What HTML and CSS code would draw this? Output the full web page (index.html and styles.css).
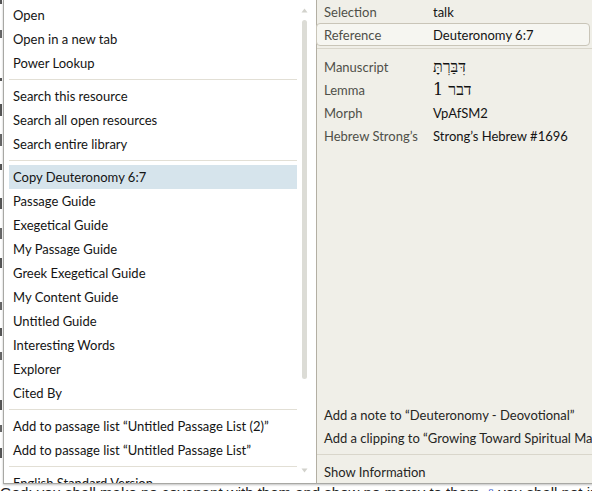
FILE: index.html
```html
<!DOCTYPE html>
<html>
<head>
<meta charset="utf-8">
<link rel="stylesheet" href="styles.css">
</head>
<body>
<div class="doc">
  <div class="strip"></div>
  <p class="last">God: you shall make no covenant with them and show no mercy to them. <span class="fn">⁸</span> you shall not intermarry</p>
</div>

<div class="popup">
  <div class="menu">
    <div class="list">
      <div class="item">Open</div>
      <div class="item">Open in a new tab</div>
      <div class="item">Power Lookup</div>
      <div class="sep"></div>
      <div class="item">Search this resource</div>
      <div class="item">Search all open resources</div>
      <div class="item">Search entire library</div>
      <div class="sep"></div>
      <div class="item active">Copy Deuteronomy 6:7</div>
      <div class="item">Passage Guide</div>
      <div class="item">Exegetical Guide</div>
      <div class="item">My Passage Guide</div>
      <div class="item">Greek Exegetical Guide</div>
      <div class="item">My Content Guide</div>
      <div class="item">Untitled Guide</div>
      <div class="item">Interesting Words</div>
      <div class="item">Explorer</div>
      <div class="item">Cited By</div>
      <div class="sep"></div>
      <div class="item">Add to passage list “Untitled Passage List (2)”</div>
      <div class="item">Add to passage list “Untitled Passage List”</div>
      <div class="sep"></div>
      <div class="item cut">English Standard Version</div>
    </div>
    <div class="scroll">
      <svg class="arrow" width="7" height="5" viewBox="0 0 7 5"><path d="M3.5 0.5 L6.5 4.5 L0.5 4.5 Z" fill="#d2d2cc"/></svg>
      <div class="thumb"></div>
      <div class="track-rest"></div>
      <svg class="arrow" width="7" height="5" viewBox="0 0 7 5"><path d="M0.5 0.5 L6.5 0.5 L3.5 4.5 Z" fill="#d2d2cc"/></svg>
    </div>
  </div>

  <div class="info">
    <div class="top">
      <div class="prow"><span class="lbl">Selection</span><span class="val">talk</span></div>
      <div class="prow ref"><span class="lbl">Reference</span><span class="val">Deuteronomy 6:7</span></div>
      <div class="psep"></div>
      <div class="prow"><span class="lbl">Manuscript</span><span class="val heb" dir="rtl">דִּבַּרְתָּ</span></div>
      <div class="prow"><span class="lbl">Lemma</span><span class="val heb" dir="rtl">דבר 1</span></div>
      <div class="prow"><span class="lbl">Morph</span><span class="val">VpAfSM2</span></div>
      <div class="prow"><span class="lbl">Hebrew Strong’s</span><span class="val">Strong’s Hebrew #1696</span></div>
    </div>
    <div class="bottom">
      <div class="prow act">Add a note to “Deuteronomy - Deovotional”</div>
      <div class="prow act">Add a clipping to “Growing Toward Spiritual Maturity”</div>
      <div class="psep wide"></div>
      <div class="prow act">Show Information</div>
    </div>
  </div>
</div>
</body>
</html>
```
FILE: styles.css
```css
html, body {
  margin: 0;
  padding: 0;
}
body {
  width: 592px;
  height: 491px;
  overflow: hidden;
  position: relative;
  background: #ffffff;
  font-family: "Lato", "Liberation Sans", sans-serif;
}
.doc {
  font-family: "Liberation Sans", sans-serif;
  font-size: 15px;
  color: #222;
}
.strip {
  width: 2px;
  height: 482px;
  background: linear-gradient(to bottom,
    #555 0px, #555 4px, transparent 4px, transparent 30px,
    #666 30px, #666 38px, transparent 38px, transparent 78px,
    #555 78px, #555 81px, transparent 81px, transparent 104px,
    #555 104px, #555 116px, transparent 116px, transparent 134px,
    #666 134px, #666 146px, transparent 146px, transparent 164px,
    #555 164px, #555 170px, transparent 170px, transparent 198px,
    #555 198px, #555 209px, transparent 209px, transparent 228px,
    #666 228px, #666 239px, transparent 239px, transparent 258px,
    #555 258px, #555 268px, transparent 268px, transparent 302px,
    #666 302px, #666 310px, transparent 310px, transparent 328px,
    #555 328px, #555 336px, transparent 336px, transparent 352px,
    #666 352px, #666 360px, transparent 360px, transparent 400px,
    #555 400px, #555 410px, transparent 410px, transparent 425px,
    #666 425px, #666 432px, transparent 432px, transparent 448px,
    #555 448px, #555 458px, transparent 458px, transparent 482px);
}
.doc p {
  margin: 0;
  height: 22px;
  line-height: 22px;
  white-space: nowrap;
}
.doc .fn {
  color: #3a5bd0;
}

.popup {
  position: absolute;
  left: 3px;
  top: 0;
  width: 589px;
  height: 483px;
  display: flex;
  border-left: 1px solid #a8a8a4;
  border-bottom: 1px solid #a8a8a4;
  box-shadow: 0 1px 2px rgba(0, 0, 0, 0.25);
  overflow: hidden;
}

.menu {
  width: 312px;
  flex: none;
  background: #ffffff;
  display: flex;
  overflow: hidden;
}
.list {
  width: 288px;
  padding: 3px 0 0 5px;
  flex: none;
  overflow: hidden;
}
.item {
  height: 24px;
  line-height: 24px;
  padding-left: 4px;
  font-size: 13px;
  color: #141414;
  white-space: nowrap;
}
.item.cut {
  height: 12px;
  overflow: hidden;
}
.item.active {
  background: #d6e4ec;
}
.sep {
  height: 1px;
  background: #e2dfd5;
  margin: 4px 0 4px 0;
}

.scroll {
  width: 19px;
  flex: none;
  display: flex;
  flex-direction: column;
  align-items: flex-start;
  padding: 8px 0 10px 4px;
  box-sizing: border-box;
}
.arrow {
  display: block;
}
.thumb {
  width: 5px;
  height: 359px;
  margin: 7px 0 0 1px;
  border-radius: 3px;
  background: #dcdcd6;
}
.track-rest {
  flex: 1;
}

.info {
  flex: 1;
  background: #f0efe8;
  border-left: 1px solid #b3afa3;
  display: flex;
  flex-direction: column;
  justify-content: space-between;
  min-width: 0;
}
.prow {
  height: 23px;
  display: flex;
  align-items: center;
  padding-left: 7px;
  font-size: 13px;
  white-space: nowrap;
  overflow: hidden;
  color: #1f1f1f;
}
.lbl {
  width: 109px;
  flex: none;
  color: #4f4f48;
}
.val {
  color: #141414;
}
.heb {
  font-family: "DejaVu Serif", "Liberation Serif", serif;
  font-size: 16px;
  color: #111;
}
.prow.ref {
  height: 21px;
  margin: 0 3px 0 -1px;
  padding-left: 7px;
  border: 1px solid #c9c5b8;
  border-radius: 4px;
  background: #f6f6f1;
}
.psep {
  height: 1px;
  background: #d9d6cb;
  margin: 2px 0 6px 0;
}
.psep.wide {
  margin: 5px 0 5px 0;
}
.act {
  color: #26261f;
}
```
